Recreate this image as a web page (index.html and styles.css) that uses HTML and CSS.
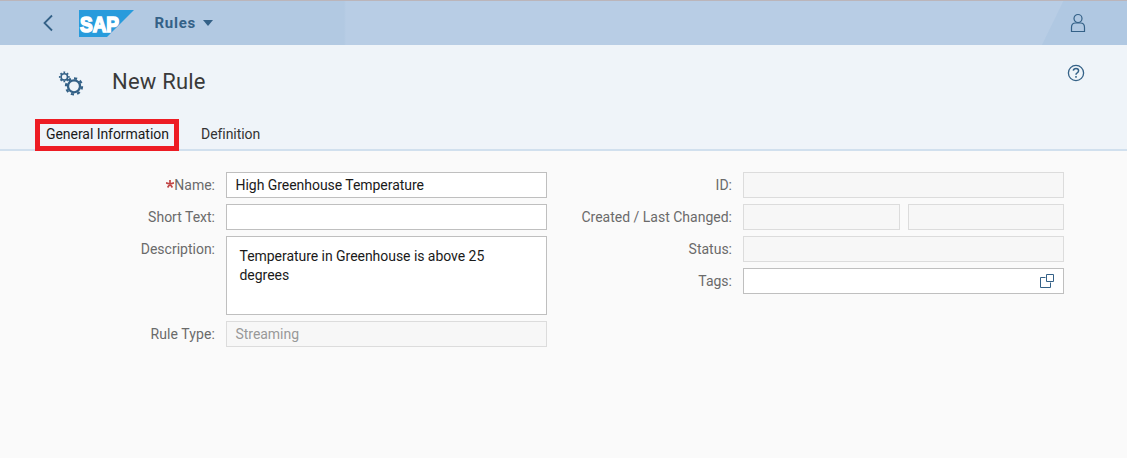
FILE: index.html
```html
<!DOCTYPE html>
<html lang="en">
<head>
<meta charset="utf-8">
<title>New Rule</title>
<link rel="stylesheet" href="styles.css">
</head>
<body>
<header class="shell">
  <svg class="back" width="12" height="18" viewBox="0 0 12 18"><path d="M10 1.500 2.500 9 10 16.500"/></svg>
  <svg class="logo" width="55" height="27" viewBox="0 0 55 27"><path class="logo-shape" d="M0 0H55L28 27H0Z"/><text class="logo-text" x="1" y="21.500" textLength="39" lengthAdjust="spacingAndGlyphs">SAP</text></svg>
  <span class="app">Rules</span>
  <svg class="caret" width="10" height="6" viewBox="0 0 10 6"><path d="M0 0H10L5 6Z"/></svg>
  <svg class="user" width="16" height="20" viewBox="0 0 16 20"><circle cx="8" cy="5.500" r="4"/><path d="M1.500 18.500V14.500Q1.500 10 5.500 10H10.500Q14.500 10 14.500 14.500V18.500Z"/></svg>
</header>
<section class="page-head">
  <div class="title-row">
    <svg class="gears" width="26" height="26" viewBox="0 0 26 26">
      <circle cx="6.300" cy="5.900" r="3.200" stroke-width="1.500"/>
      <circle cx="6.300" cy="5.900" r="4.500" stroke-width="1.800" pathLength="16" stroke-dasharray="1 1" stroke-dashoffset=".5"/>
      <circle cx="16" cy="15.300" r="6" stroke-width="2.300"/>
      <circle cx="16" cy="15.300" r="8" stroke-width="2.300" pathLength="16" stroke-dasharray="1 1" stroke-dashoffset="0"/>
    </svg>
    <h1 class="title">New Rule</h1>
    <svg class="help" width="18" height="18" viewBox="0 0 18 18"><circle cx="9" cy="9" r="7.600"/><path class="question" d="M6.300 6.700Q6.600 4.500 9 4.500Q11.600 4.500 11.600 6.800Q11.600 8 10.200 8.800Q9 9.400 9 10.800M9 12V13.700"/></svg>
  </div>
  <nav class="tabs">
    <span class="tab tab-selected">General Information</span>
    <span class="tab tab-plain">Definition</span>
  </nav>
</section>
<main class="form">
  <div class="column">
    <label class="label"><svg class="required" width="8" height="8" viewBox="0 0 8 8"><path d="M4 0V4M0 2.800 4 4 8 2.800M1.600 7.500 4 4 6.400 7.500"/></svg>Name:</label><div class="field">High Greenhouse Temperature</div>
    <label class="label wide">Short Text:</label><div class="field"></div>
    <label class="label">Description:</label><div class="field area">Temperature in Greenhouse is above 25<br>degrees</div>
    <label class="label rule-type">Rule Type:</label><div class="field disabled">Streaming</div>
  </div>
  <div class="column column-right">
    <label class="label">ID:</label><div class="field disabled"></div>
    <label class="label">Created / Last Changed:</label><div class="pair"><div class="field disabled"></div><div class="field disabled"></div></div>
    <label class="label">Status:</label><div class="field disabled"></div>
    <label class="label">Tags:</label><div class="field value-help"><svg width="16" height="16" viewBox="0 0 16 16"><path d="M6.500 4.500H1.500V14.500H11.500V9.500"/><path d="M7.500 1.500H14.500V8.500H7.500Z"/></svg></div>
  </div>
</main>
</body>
</html>
```

FILE: styles.css
```css
* { box-sizing: border-box; }
body { margin: 0; height: 458px; background: #fafafa; color: #333; font: 14px/18px Roboto, "Noto Sans", sans-serif; overflow: hidden; }
svg { display: block; flex: none; fill: none; stroke: #346187; }
.shell { height: 45px; padding: 0 41px 0 42px; border-top: 1px solid #bbb5ba; display: flex; align-items: center;
  background: linear-gradient(116deg, transparent 0 calc(100% - 77px), #b0c8e2 calc(100% - 76px)), linear-gradient(90deg, #b2c9e2 0 344px, #b8cde5 346px); }
.back { stroke-width: 1.8; }
.logo { margin-left: 24.5px; stroke: none; }
.logo-shape { fill: #289bdc; }
.logo-text { fill: #fff; stroke: #fff; stroke-width: 1.7; font: 700 22.5px "Liberation Sans", sans-serif; }
.app { margin-left: 21px; width: 43.5px; color: #346187; font-size: 15px; font-weight: 700; letter-spacing: .75px; }
.caret { margin-left: 5px; fill: #346187; stroke: none; }
.user { margin-left: auto; stroke-width: 1.2; }
.page-head { height: 106px; background: #eff4f9; border-bottom: 2px solid #d1e0ee; }
.title-row { height: 74px; padding: 0 42px 0 58px; display: flex; align-items: center; }
.title { margin: 0 0 0 28px; color: #3a3a3a; font-size: 22px; line-height: 28px; font-weight: 400; letter-spacing: .2px; }
.gears { margin-top: 3px; }
.help { align-self: flex-start; margin: 19px 0 0 auto; stroke-width: 1.3; }
.question { stroke-width: 1.5; }
.tabs { display: flex; padding-left: 35px; height: 32px; }
.tab { height: 32px; padding-bottom: 2px; display: flex; align-items: center; letter-spacing: -.05px; }
.tab-selected { width: 144px; border: 5px solid #ed1c24; padding-left: 6px; color: #1a1a1a; white-space: nowrap; }
.tab-plain { margin-left: 22px; }
.form { display: flex; padding-top: 21px; }
.column { width: 547px; display: grid; align-content: start; grid-template-columns: 215px 321px; column-gap: 11px; row-gap: 6px; }
.column-right { width: 517px; grid-template-columns: 185px 321px; }
.label { height: 26px; display: flex; justify-content: flex-end; align-items: center; color: #6a6a6a; white-space: nowrap; }
.rule-type { letter-spacing: .1px; }
.required { stroke: #c14646; stroke-width: 1.7; margin-bottom: 3px; }
.field { height: 26px; border: 1px solid #bfbfbf; background: #fff; padding-left: 8.5px; display: flex; align-items: center; color: #1a1a1a; letter-spacing: -.04px; }
.area { display: block; height: 79px; padding: 10px 12.5px; line-height: 19px; }
.disabled { border-color: #dcdcdc; background: #f7f7f7; color: #999; }
.pair { display: grid; grid-template-columns: 157px 156px; gap: 8px; }
.value-help { justify-content: flex-end; padding-right: 8px; }
```
